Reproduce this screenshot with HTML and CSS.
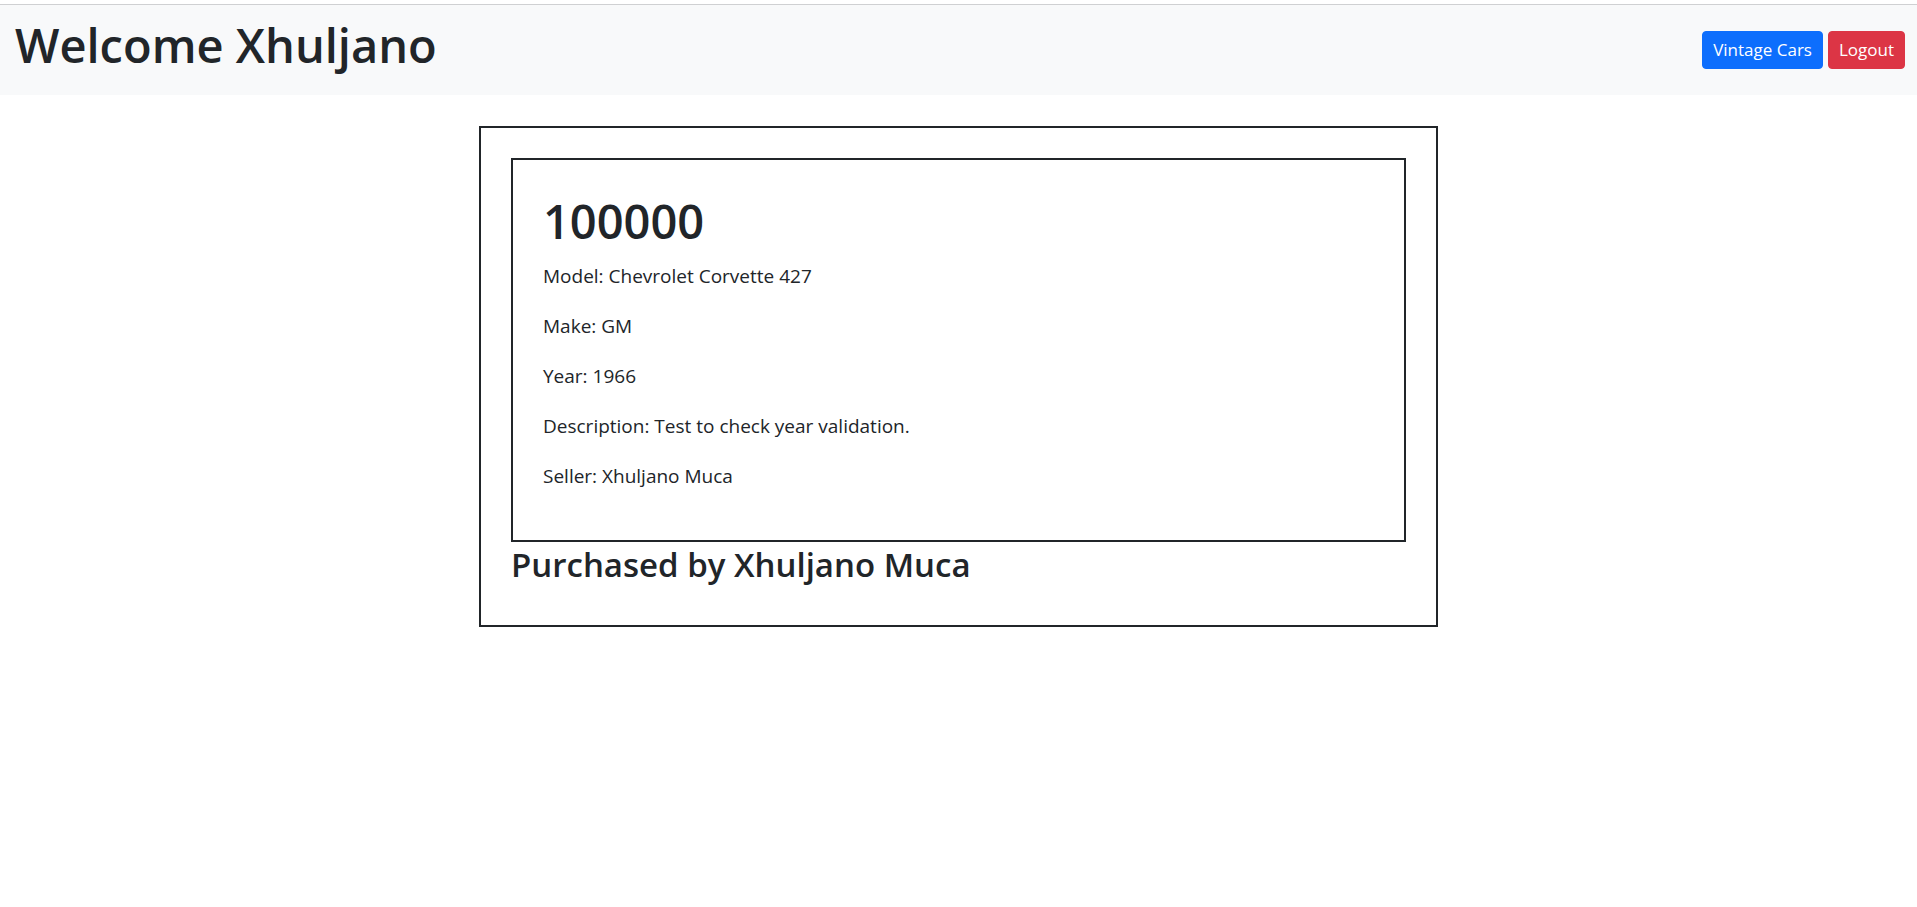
FILE: index.html
```html
<!DOCTYPE html>
<html lang="en">
<head>
<meta charset="utf-8">
<title>Purchased car</title>
<link rel="stylesheet" href="styles.css">
</head>
<body>
<div class="topline"></div>
<nav class="navbar">
  <h1 class="welcome">Welcome Xhuljano</h1>
  <div class="nav-actions">
    <a class="btn btn-primary" href="#">Vintage Cars</a>
    <a class="btn btn-danger" href="#">Logout</a>
  </div>
</nav>
<main class="page">
  <section class="outer-card">
    <div class="car-card">
      <h1 class="price">100000</h1>
      <p>Model: Chevrolet Corvette 427</p>
      <p>Make: GM</p>
      <p>Year: 1966</p>
      <p>Description: Test to check year validation.</p>
      <p>Seller: Xhuljano Muca</p>
    </div>
    <h3 class="purchased">Purchased by Xhuljano Muca</h3>
  </section>
</main>
</body>
</html>
```

FILE: styles.css
```css
* { box-sizing: border-box; }

html, body {
  margin: 0;
  padding: 0;
  background: #ffffff;
}

body {
  font-family: "Open Sans", "Noto Sans", sans-serif;
  font-size: 19px;
  line-height: 30px;
  color: #212529;
}

.topline {
  height: 5px;
  border-bottom: 1px solid #cfd0d2;
  background: #ffffff;
}

.navbar {
  display: flex;
  align-items: center;
  justify-content: space-between;
  background: #f8f9fa;
  padding: 10px 12px 10px 15px;
}

.welcome {
  margin: 0 0 10px 0;
  font-size: 47px;
  font-weight: 600;
  line-height: 60px;
}

.nav-actions {
  display: flex;
  gap: 5px;
}

.btn {
  display: inline-block;
  font-size: 17px;
  line-height: 26px;
  padding: 5px 10px;
  border-radius: 4px;
  border: 1px solid transparent;
  color: #ffffff;
  text-decoration: none;
}

.btn-primary {
  background: #0d6efd;
  border-color: #0d6efd;
}

.btn-danger {
  background: #dc3545;
  border-color: #dc3545;
}

.page {
  padding-top: 31px;
}

.outer-card {
  width: 959px;
  margin: 0 auto;
  border: 2px solid #212529;
  padding: 30px 30px 29px 30px;
}

.car-card {
  border: 2px solid #212529;
  padding: 31px 30px 29px 30px;
}

.price {
  margin: 0 0 10px 0;
  font-size: 47px;
  font-weight: 600;
  line-height: 60px;
}

.car-card p {
  margin: 0 0 20px 0;
}

.purchased {
  margin: 0 0 10px 0;
  padding-top: 2px;
  font-size: 33px;
  font-weight: 600;
  line-height: 42px;
}
```
